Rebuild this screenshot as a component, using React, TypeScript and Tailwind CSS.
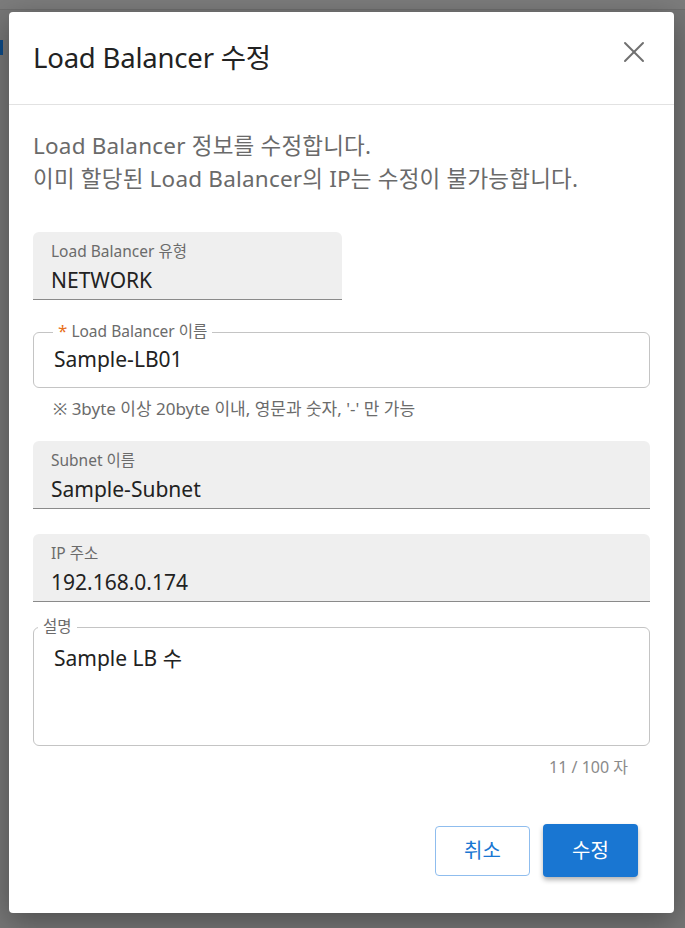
import { X } from 'lucide-react';

const font = { fontFamily: '"Noto Sans", "Noto Sans CJK KR", sans-serif' };

function FilledField({ label, value, width }: { label: string; value: string; width: string }) {
    return (
        <div className={`${width} h-[68px] bg-[#efefef] rounded-t-[6px] border-b border-[#8a8a8a] px-[18px] pt-[9px]`}>
            <div className="text-[15.5px] leading-[20px] text-[#6b6b6b]">{label}</div>
            <div className="text-[21px] leading-[28px] text-[#222] mt-[5px]">{value}</div>
        </div>
    );
}

export default function App() {
    return (
        <div className="w-[685px] h-[928px] bg-[#767676] relative overflow-hidden" style={font}>
            <div className="absolute left-0 top-[40px] w-[3px] h-[15px] bg-[#0d4a86]" />
            <div className="absolute left-0 top-0 w-full h-[10px] bg-[#7c7c7c] border-b border-[#6e6e6e]" />
            <div className="relative ml-[9px] mt-[12px] w-[665px] h-[901px] bg-white rounded-[4px] shadow-[0_8px_30px_rgba(0,0,0,0.35)] flex flex-col">
                <div className="h-[93px] flex items-center justify-between pl-[24px] pr-[22px] border-b border-[#e2e2e2]">
                    <h2 className="text-[27.5px] text-[#222] tracking-[-0.2px]">Load Balancer 수정</h2>
                    <X className="w-[36px] h-[36px] text-[#707070] -mt-[12px]" strokeWidth={1.3} />
                </div>
                <div className="px-[24px] pt-[24px] flex flex-col">
                    <p className="text-[22.5px] leading-[33px] text-[#6a6a6a] tracking-[0.2px]">
                        Load Balancer 정보를 수정합니다.<br />
                        이미 할당된 Load Balancer의 IP는 수정이 불가능합니다.
                    </p>

                    <div className="mt-[37px]">
                        <FilledField label="Load Balancer 유형" value="NETWORK" width="w-[309px]" />
                    </div>

                    <div className="mt-[32px] relative h-[56px] border border-[#c4c4c4] rounded-[6px] flex items-center px-[20px]">
                        <span className="absolute -top-[12px] left-[19px] bg-white px-[5px] text-[15.5px] leading-[20px] text-[#6b6b6b]">
                            <span className="text-[#e8701a] text-[17px] mr-[4px]">*</span>Load Balancer 이름
                        </span>
                        <span className="text-[21px] text-[#222]">Sample-LB01</span>
                    </div>
                    <div className="mt-[10px] ml-[20px] text-[17px] leading-[22px] text-[#6b6b6b]">
                        ※ 3byte 이상 20byte 이내, 영문과 숫자, '-' 만 가능
                    </div>

                    <div className="mt-[21px]">
                        <FilledField label="Subnet 이름" value="Sample-Subnet" width="w-full" />
                    </div>
                    <div className="mt-[25px]">
                        <FilledField label="IP 주소" value="192.168.0.174" width="w-full" />
                    </div>

                    <div className="mt-[25px] relative h-[119px] border border-[#c4c4c4] rounded-[6px] px-[20px] pt-[16px]">
                        <span className="absolute -top-[12px] left-[4px] bg-white px-[5px] text-[15.5px] leading-[20px] text-[#6b6b6b]">설명</span>
                        <span className="text-[21px] leading-[28px] text-[#222]">Sample LB 수</span>
                    </div>
                    <div className="mt-[9px] pr-[22px] text-right text-[16px] leading-[24px] text-[#8a8a8a]">11 / 100 자</div>

                    <div className="mt-[45px] flex justify-end items-center gap-[13px] pr-[12px]">
                        <button className="w-[95px] h-[50px] border border-[#8fbdee] rounded-[4px] text-[20px] text-[#1976d2] bg-white">취소</button>
                        <button className="w-[95px] h-[53px] rounded-[4px] text-[20px] text-white bg-[#1976d2] shadow-[0_3px_5px_rgba(0,0,0,0.3)]">수정</button>
                    </div>
                </div>
            </div>
        </div>
    );
}
